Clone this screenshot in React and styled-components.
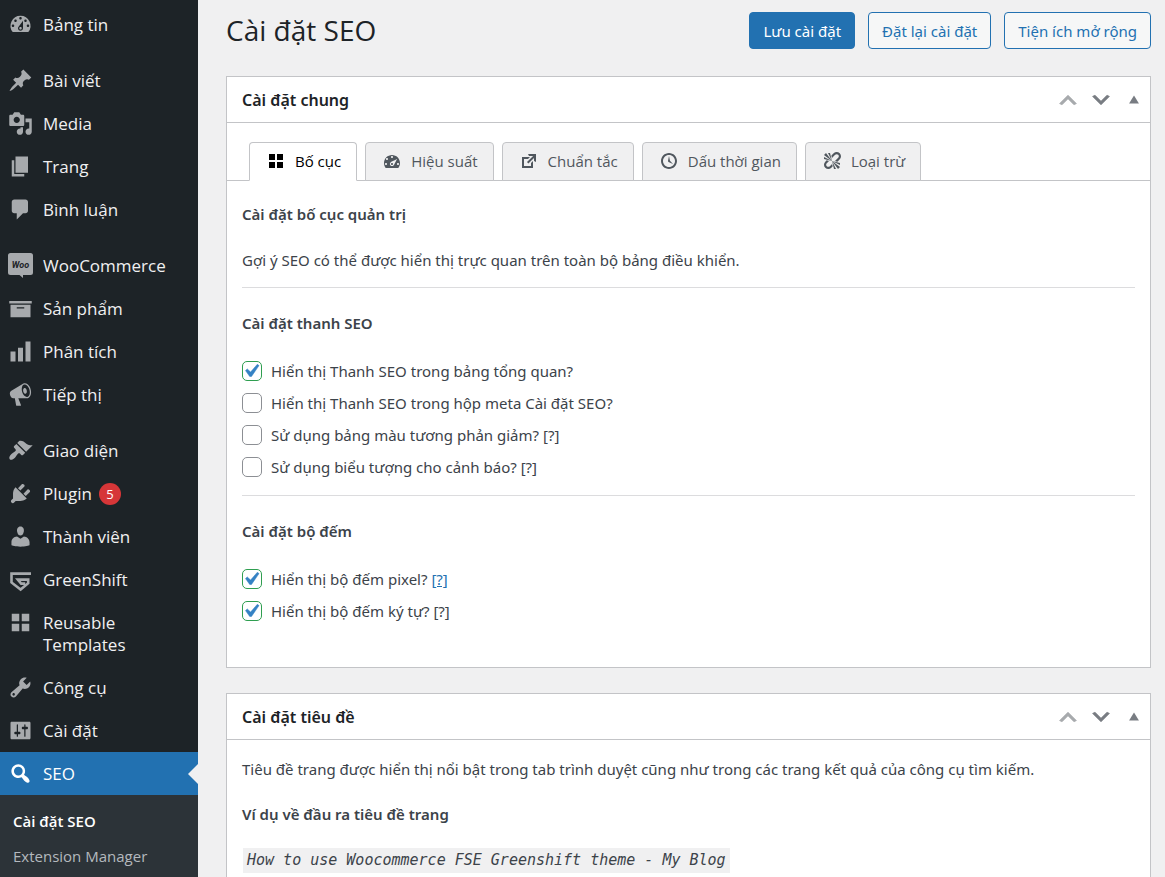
import React, { useState } from "react";
import styled, { createGlobalStyle, css } from "styled-components";

const GlobalStyle = createGlobalStyle`
  * {
    box-sizing: border-box;
  }
  body {
    margin: 0;
    background: #f0f0f1;
    color: #3c434a;
    font-family: "Noto Sans", "Open Sans", sans-serif;
    font-size: 15px;
    line-height: 24px;
  }
  button, input {
    font: inherit;
  }
`;

const Shell = styled.div`
  display: flex;
  height: 100vh;
  overflow: hidden;
`;

const Sidebar = styled.nav`
  flex: 0 0 198px;
  min-width: 0;
  background: #1d2327;
  padding-top: 3px;
  font-family: "Open Sans", "Noto Sans", sans-serif;
  ul {
    list-style: none;
    margin: 0;
    padding: 0;
  }
`;

const MenuItem = styled.li`
  margin-top: ${(p) => (p.$spaced ? 13 : 0)}px;
`;

const MenuLink = styled.a`
  display: flex;
  align-items: flex-start;
  position: relative;
  padding: 11px 24px 10px 8px;
  gap: 10px;
  color: #f0f0f1;
  font-size: 17px;
  line-height: 22px;
  text-decoration: none;
  svg {
    flex: none;
    width: 25px;
    height: 25px;
    margin: -2px 0 -1px;
    fill: #a7aaad;
  }
  ${(p) =>
    p.$active &&
    css`
      background: #2271b1;
      color: #fff;
      svg {
        fill: #fff;
      }
      &::after {
        content: "";
        position: absolute;
        right: 0;
        top: 50%;
        margin-top: -10px;
        border: 10px solid transparent;
        border-left: 0;
        border-right-color: #f0f0f1;
      }
    `}
`;

const Count = styled.span`
  display: inline-block;
  min-width: 22px;
  height: 22px;
  margin-left: 7px;
  border-radius: 11px;
  background: #d63638;
  color: #fff;
  font-size: 13px;
  line-height: 22px;
  text-align: center;
  vertical-align: top;
`;

const SubMenu = styled.ul`
  background: #2c3338;
  && {
    padding: 8px 0 100px;
  }
`;

const SubLink = styled.a`
  display: block;
  padding: 6px 13px 5px;
  color: ${(p) => (p.$current ? "#fff" : "#b4b9be")};
  font-size: 15px;
  font-weight: ${(p) => (p.$current ? 600 : 400)};
  text-decoration: none;
`;

const Main = styled.main`
  flex: 1;
  min-width: 0;
  padding: 12px 14px 0 28px;
`;

const TopBar = styled.header`
  display: flex;
  align-items: center;
  justify-content: space-between;
  margin-bottom: 27px;
  h1 {
    margin: 0;
    color: #1d2327;
    font-family: "Open Sans", "Noto Sans", sans-serif;
    font-size: 28px;
    font-weight: 400;
    line-height: 37px;
  }
`;

const Actions = styled.div`
  display: flex;
  gap: 13px;
`;

const Button = styled.button`
  height: 37px;
  padding: 0 13px;
  border: 1px solid #2271b1;
  border-radius: 4px;
  background: ${(p) => (p.$primary ? "#2271b1" : "#f6f7f7")};
  color: ${(p) => (p.$primary ? "#fff" : "#2271b1")};
  cursor: pointer;
`;

const Panel = styled.section`
  margin-bottom: 25px;
  border: 1px solid #c3c4c7;
  background: #fff;
`;

const PanelHeader = styled.div`
  display: flex;
  align-items: center;
  justify-content: space-between;
  height: 46px;
  padding: 0 4px 0 15px;
  border-bottom: 1px solid #c3c4c7;
  h2 {
    margin: 0;
    color: #1d2327;
    font-size: 16px;
    font-weight: 600;
  }
`;

const Handles = styled.div`
  display: flex;
  align-items: center;
  gap: 9px;
`;

const Handle = styled.button`
  display: flex;
  padding: 0;
  border: 0;
  background: none;
  color: ${(p) => (p.$faded ? "#a7aaad" : "#787c82")};
  svg {
    width: 24px;
    height: 24px;
    padding: ${(p) => (p.$small ? 3 : 0)}px;
    fill: currentColor;
    stroke: currentColor;
    stroke-width: ${(p) => (p.$small ? 0 : 0.6)};
    stroke-linejoin: round;
  }
`;

const Tabs = styled.div`
  display: flex;
  gap: 8px;
  padding: 19px 22px 0;
  border-bottom: 1px solid #c3c4c7;
`;

const Tab = styled.button`
  display: flex;
  align-items: center;
  gap: 9px;
  height: 39px;
  margin-bottom: -1px;
  padding: 0 15px 1px 16px;
  border: 1px solid #c3c4c7;
  border-bottom-color: ${(p) => (p.$active ? "#fff" : "#c3c4c7")};
  border-radius: 4px 4px 0 0;
  background: ${(p) => (p.$active ? "#fff" : "#f0f0f1")};
  color: ${(p) => (p.$active ? "#000" : "#50575e")};
  font-family: "Open Sans", "Noto Sans", sans-serif;
  font-size: 15px;
  font-weight: 500;
  white-space: nowrap;
  svg {
    width: 20px;
    height: 20px;
    fill: currentColor;
  }
`;

const PanelBody = styled.div`
  padding: ${(p) => (p.$tabbed ? "21px 15px 44px" : "17px 15px 60px")};
  h3 {
    margin: 0;
    font-size: 15px;
    font-weight: 600;
    line-height: 24px;
  }
  p {
    margin: 0;
  }
  hr {
    margin: 15px 0 23px;
    border: 0;
    border-top: 1px solid #dcdcde;
  }
  h3 + p {
    margin-top: 22px;
  }
  p + h3 {
    margin-top: 21px;
  }
`;

const Checks = styled.div`
  display: flex;
  flex-direction: column;
  gap: 8px;
  margin-top: 24px;
  & + hr {
    margin-top: 16px;
  }
`;

const CheckRow = styled.div`
  display: flex;
  align-items: center;
  gap: 9px;
  a {
    color: #2271b1;
  }
`;

const CheckBox = styled.span`
  display: grid;
  width: 20px;
  height: 20px;
  input,
  svg {
    grid-area: 1 / 1;
    width: 20px;
    height: 20px;
    margin: 0;
  }
  input {
    appearance: none;
    border: 1px solid #8c8f94;
    border-radius: 5px;
    background: #fff;
  }
  input:checked {
    border-color: #2f9e50;
  }
  svg {
    z-index: 1;
    width: 26px;
    height: 26px;
    margin: -3px -4px;
    fill: #3582c4;
    stroke: #3582c4;
    stroke-width: 0.4;
    pointer-events: none;
  }
`;

const Example = styled.code`
  display: inline-block;
  margin: 22px 0 0 1px;
  padding: 0 4px;
  background: #f0f0f1;
  font-family: "DejaVu Sans Mono", monospace;
  font-size: 15px;
  font-style: italic;
  line-height: 25px;
`;

const paths = {
  dashboard:
    "M3.76 16h12.48A7.998 7.998 0 0 0 10 3a7.998 7.998 0 0 0-6.24 13zM10 4c.55 0 1 .45 1 1s-.45 1-1 1-1-.45-1-1 .45-1 1-1zM6 6c.55 0 1 .45 1 1s-.45 1-1 1-1-.45-1-1 .45-1 1-1zm8 0c.55 0 1 .45 1 1s-.45 1-1 1-1-.45-1-1 .45-1 1-1zm-5.37 5.55L12 7v6c0 1.1-.9 2-2 2s-2-.9-2-2c0-.57.24-1.08.63-1.45zM4 10c.55 0 1 .45 1 1s-.45 1-1 1-1-.45-1-1 .45-1 1-1zm12 0c.55 0 1 .45 1 1s-.45 1-1 1-1-.45-1-1 .45-1 1-1zm-5 3c0-.55-.45-1-1-1s-1 .45-1 1 .45 1 1 1 1-.45 1-1z",
  post: "M10.44 3.02l1.82-1.82 6.36 6.35-1.83 1.82c-1.05-.68-2.48-.57-3.41.36l-.75.75c-.92.93-1.04 2.35-.35 3.41l-1.83 1.82-2.41-2.41-2.8 2.79c-.42.42-3.38 2.71-3.8 2.29s1.86-3.39 2.28-3.81l2.79-2.79L4.1 9.36l1.83-1.82c1.05.69 2.48.57 3.4-.36l.75-.75c.93-.92 1.05-2.35.36-3.41z",
  media:
    "M13 11V4c0-.55-.45-1-1-1h-1.67L9 1H5L3.67 3H2c-.55 0-1 .45-1 1v7c0 .55.45 1 1 1h10c.55 0 1-.45 1-1zM7 4.5c1.38 0 2.5 1.12 2.5 2.5S8.38 9.5 7 9.5 4.5 8.38 4.5 7 5.62 4.5 7 4.5zM14 6h5v10.5c0 1.38-1.12 2.5-2.5 2.5S14 17.88 14 16.5s1.12-2.5 2.5-2.5c.17 0 .34.02.5.05V9h-3V6zm-4 8.05V13h2v3.5c0 1.38-1.12 2.5-2.5 2.5S7 17.88 7 16.5 8.12 14 9.5 14c.17 0 .34.02.5.05z",
  page: "M6 15V2h10v13H6zm-1 1h8v2H3V5h2v11z",
  comments:
    "M5 2h9c1.1 0 2 .9 2 2v7c0 1.1-.9 2-2 2h-2l-5 5v-5H5c-1.1 0-2-.9-2-2V4c0-1.1.9-2 2-2z",
  archive: "M19 4v2H1V4h18zM2 7h16v10H2V7zm11 3V9H7v1h6z",
  chart: "M18 18V2h-4v16h4zm-6 0V7H8v11h4zm-6 0v-8H2v8h4z",
  megaphone:
    "M18.15 5.94c.46 1.62.38 3.22-.02 4.48-.42 1.28-1.26 2.18-2.3 2.48-.16.06-.26.06-.4.06-.06.02-.12.02-.18.02-.06.02-.14.02-.22.02h-6.8l2.22 5.5c.02.14-.06.26-.14.34-.08.1-.24.16-.34.16H6.95c-.1 0-.26-.06-.34-.16-.08-.08-.16-.2-.14-.34l-1-5.5H4.25l-.02-.02c-.5.06-1.08-.18-1.54-.62s-.88-1.08-1.06-1.88c-.24-.8-.2-1.56-.02-2.2.18-.62.58-1.08 1.06-1.3l.02-.02 9-5.4c.1-.06.18-.1.24-.16.06-.04.14-.08.24-.12.16-.08.28-.12.5-.18 1.04-.3 2.24.1 3.22.98s1.84 2.24 2.26 3.86zm-2.58 5.98h-.02c.4-.1.74-.34 1.04-.7.58-.7.86-1.76.86-3.04 0-.64-.1-1.3-.28-1.98-.34-1.36-1.02-2.5-1.78-3.24s-1.68-1.1-2.46-.88c-.82.22-1.4.96-1.7 2-.32 1.04-.28 2.36.06 3.72.38 1.36 1 2.5 1.8 3.24.78.74 1.62 1.1 2.48.88zm-2.54-7.08c.22-.04.42-.02.62.04.38.16.76.48 1.02 1s.42 1.2.42 1.78c0 .3-.04.56-.12.8-.18.48-.44.84-.86.94-.34.1-.8-.06-1.14-.4s-.64-.86-.78-1.5c-.18-.62-.12-1.24.02-1.72s.48-.84.82-.94z",
  appearance:
    "M14.48 11.06L7.41 3.99l1.5-1.5c.5-.56 2.3-.47 3.51.32 1.21.8 1.43 1.28 2.91 2.1 1.18.64 2.45 1.26 4.45.85zm-.71.71L6.7 4.7 4.93 6.47c-.39.39-.39 1.02 0 1.41l1.06 1.06c.39.39.39 1.03 0 1.42-.6.6-1.43 1.11-2.21 1.69-.35.26-.7.53-1.01.84C1.43 14.23.4 16.08 1.4 17.07c.99 1 2.84-.03 4.18-1.36.31-.31.58-.66.85-1.02.57-.78 1.08-1.61 1.69-2.21.39-.39 1.02-.39 1.41 0l1.06 1.06c.39.39 1.02.39 1.41 0z",
  plugins:
    "M13.11 4.36L9.87 7.6 8 5.73l3.24-3.24c.35-.34 1.05-.2 1.56.32.52.51.66 1.21.31 1.55zm-8 1.77l.91-1.12 9.01 9.01-1.19.84c-.71.71-2.63 1.16-3.82 1.16H6.14L4.9 17.26c-.59.59-1.54.59-2.12 0-.59-.58-.59-1.53 0-2.12l1.24-1.24v-3.88c0-1.13.4-3.19 1.09-3.89zm7.26 3.97l3.24-3.24c.34-.35 1.04-.21 1.55.31.52.51.66 1.21.31 1.55l-3.24 3.25z",
  users:
    "M10 9.25c-2.27 0-2.73-3.44-2.73-3.44C7 4.02 7.82 2 9.97 2c2.16 0 2.98 2.02 2.71 3.81 0 0-.41 3.44-2.68 3.44zm0 2.57L12.72 10c2.39 0 4.52 2.33 4.52 4.53v2.49s-3.65 1.13-7.24 1.13c-3.65 0-7.24-1.13-7.24-1.13v-2.49c0-2.25 1.94-4.48 4.47-4.48z",
  grid: "M9 9V3H3v6h6zm8 0V3h-6v6h6zm-8 8v-6H3v6h6zm8 0v-6h-6v6h6z",
  tools:
    "M16.68 9.77c-1.34 1.34-3.3 1.67-4.95.99l-5.41 6.52c-.99.99-2.59.99-3.58 0s-.99-2.59 0-3.57l6.52-5.42c-.68-1.65-.35-3.61.99-4.95 1.28-1.28 3.12-1.62 4.72-1.06l-2.89 2.89 2.82 2.82 2.86-2.87c.53 1.58.18 3.39-1.08 4.65zM3.81 16.21c.4.39 1.04.39 1.43 0 .4-.4.4-1.04 0-1.43-.39-.4-1.03-.4-1.43 0-.39.39-.39 1.03 0 1.43z",
  settings:
    "M18 16V4c0-.55-.45-1-1-1H3c-.55 0-1 .45-1 1v12c0 .55.45 1 1 1h14c.55 0 1-.45 1-1zM8 11h1c.55 0 1 .45 1 1s-.45 1-1 1H8v1.5c0 .28-.22.5-.5.5s-.5-.22-.5-.5V13H6c-.55 0-1-.45-1-1s.45-1 1-1h1V5.5c0-.28.22-.5.5-.5s.5.22.5.5V11zm5-2h-1c-.55 0-1-.45-1-1s.45-1 1-1h1V5.5c0-.28.22-.5.5-.5s.5.22.5.5V7h1c.55 0 1 .45 1 1s-.45 1-1 1h-1v5.5c0 .28-.22.5-.5.5s-.5-.22-.5-.5V9z",
  search:
    "M12.14 4.18c1.87 1.87 2.11 4.75.72 6.89.12.1.22.21.36.31.2.16.47.36.81.59.34.24.56.39.66.47.42.31.73.57.94.78.32.32.6.65.84 1 .25.35.44.69.59 1.04.14.35.21.68.18 1-.02.32-.14.59-.36.81s-.49.34-.81.36c-.31.02-.65-.04-.99-.19-.35-.14-.7-.34-1.04-.59-.35-.24-.68-.52-1-.84-.21-.21-.47-.52-.77-.93-.1-.13-.25-.35-.47-.66-.22-.32-.4-.57-.56-.78-.16-.2-.29-.35-.44-.5-2.07 1.09-4.69.76-6.44-.98-2.14-2.15-2.14-5.64 0-7.78 2.15-2.15 5.63-2.15 7.78 0zm-1.41 6.36c1.36-1.37 1.36-3.58 0-4.95-1.37-1.37-3.59-1.37-4.95 0-1.37 1.37-1.37 3.58 0 4.95 1.36 1.37 3.58 1.37 4.95 0z",
  performance:
    "M3.76 17.01h12.48C17.34 15.63 18 13.9 18 12c0-4.41-3.58-8-8-8s-8 3.59-8 8c0 1.9.66 3.63 1.76 5.01zM9 6c0-.55.45-1 1-1s1 .45 1 1c0 .56-.45 1-1 1s-1-.44-1-1zM4 8c0-.55.45-1 1-1s1 .45 1 1c0 .56-.45 1-1 1s-1-.44-1-1zm4.52 3.4c.84-.83 6.51-3.5 6.51-3.5s-2.66 5.68-3.49 6.51c-.84.84-2.18.84-3.02 0-.83-.83-.83-2.18 0-3.01zM3 13c0-.55.45-1 1-1s1 .45 1 1c0 .56-.45 1-1 1s-1-.44-1-1zm6 0c0 .56.45 1 1 1s1-.44 1-1c0-.55-.45-1-1-1s-1 .45-1 1zm6 0c0-.55.45-1 1-1s1 .45 1 1c0 .56-.45 1-1 1s-1-.44-1-1z",
  external:
    "M9 3h8v8l-2-1V6.92l-5.6 5.59-1.41-1.41L14.08 5H10zm3 12v-3l2-2v7H3V6h8L9 8H5v7h7z",
  clock:
    "M10 2c4.42 0 8 3.58 8 8s-3.58 8-8 8-8-3.58-8-8 3.58-8 8-8zm0 14c3.31 0 6-2.69 6-6s-2.69-6-6-6-6 2.69-6 6 2.69 6 6 6zm-.71-5.29c.07.05.14.1.23.15l-.02.02L14 13l-3.03-3.19L10 5l-.97 4.81h.01c0 .02-.01.05-.02.09S9 9.97 9 10c0 .28.1.52.29.71z",
  unlink:
    "M17.74 2.26c1.68 1.69 1.68 4.41 0 6.1l-1.53 1.52c-.32.33-.69.58-1.08.77L13 10l1.69-1.64.76-.77.76-.76c.84-.84.84-2.2 0-3.04-.84-.85-2.2-.85-3.04 0l-.77.76-.76.76L10 7l-.65-2.14c.19-.38.44-.75.77-1.07l1.52-1.53c1.69-1.68 4.42-1.68 6.1 0zM2 4l8 6-6-8zm4-2l4 8-2-8H6zM2 6l8 4-8-2V6zm7.36 7.69L10 13l.74 2.35-1.38 1.39c-1.69 1.68-4.41 1.68-6.1 0-1.68-1.68-1.68-4.42 0-6.1l1.39-1.38L7 10l-.69.64-1.52 1.53c-.85.84-.85 2.2 0 3.04.84.85 2.2.85 3.04 0zM18 16l-8-6 6 8zm-4 2l-4-8 2 8h2zm4-4l-8-4 8 2v2z",
  up: "M15 14l-5-5-5 5-2-1 7-7 7 7z",
  down: "M5 6l5 5 5-5 2 1-7 7-7-7z",
  triangle: "M10 5l5.5 9h-11z",
  check: "M14.83 4.89l1.34.94-5.81 8.38H9.02L5.78 9.67l1.34-1.25 2.57 2.4z",
};

const Icon = ({ name }) => {
  if (name === "woo") {
    return (
      <svg viewBox="0 0 25 25" aria-hidden="true">
        <path d="M2.5 0h20A2.5 2.5 0 0 1 25 2.5v17a2.5 2.5 0 0 1-2.5 2.5H15v3l-3.5-3h-9A2.5 2.5 0 0 1 0 19.500v-17A2.500 2.500 0 0 1 2.500 0z" />
        <text
          x="12.500"
          y="14.500"
          textAnchor="middle"
          fontFamily="Roboto, sans-serif"
          fontSize="9"
          fontWeight="700"
          fontStyle="italic"
          style={{ fill: "#1d2327" }}
        >
          Woo
        </text>
      </svg>
    );
  }
  if (name === "greenshift") {
    return (
      <svg viewBox="0 0 25 25" aria-hidden="true">
        <path
          d="M23 6.6H3.5v8.8l9.1 7.2 7.6-6.4v-3.6H9.8l3.4 4h4"
          style={{ fill: "none" }}
          stroke="#a7aaad"
          strokeWidth="2.6"
        />
      </svg>
    );
  }
  return (
    <svg viewBox="0 0 20 20" aria-hidden="true">
      <path d={paths[name]} />
    </svg>
  );
};

const menu = [
  { icon: "dashboard", label: "Bảng tin" },
  { icon: "post", label: "Bài viết", spaced: true },
  { icon: "media", label: "Media" },
  { icon: "page", label: "Trang" },
  { icon: "comments", label: "Bình luận" },
  { icon: "woo", label: "WooCommerce", spaced: true },
  { icon: "archive", label: "Sản phẩm" },
  { icon: "chart", label: "Phân tích" },
  { icon: "megaphone", label: "Tiếp thị" },
  { icon: "appearance", label: "Giao diện", spaced: true },
  { icon: "plugins", label: "Plugin", count: 5 },
  { icon: "users", label: "Thành viên" },
  { icon: "greenshift", label: "GreenShift" },
  { icon: "grid", label: "Reusable Templates" },
  { icon: "tools", label: "Công cụ" },
  { icon: "settings", label: "Cài đặt" },
  { icon: "search", label: "SEO", active: true },
];

const tabs = [
  { icon: "grid", label: "Bố cục" },
  { icon: "performance", label: "Hiệu suất" },
  { icon: "external", label: "Chuẩn tắc" },
  { icon: "clock", label: "Dấu thời gian" },
  { icon: "unlink", label: "Loại trừ" },
];

const Check = ({ id, label, on, help, link }) => {
  const [checked, setChecked] = useState(!!on);
  return (
    <CheckRow>
      <CheckBox>
        <input
          type="checkbox"
          id={id}
          checked={checked}
          onChange={(e) => setChecked(e.target.checked)}
        />
        {checked && <Icon name="check" />}
      </CheckBox>
      <span>
        <label htmlFor={id}>{label}</label>
        {help && " "}
        {help && (link ? <a href="#help">[?]</a> : <span>[?]</span>)}
      </span>
    </CheckRow>
  );
};

const Header = ({ title }) => (
  <PanelHeader>
    <h2>{title}</h2>
    <Handles>
      <Handle type="button" $faded>
        <Icon name="up" />
      </Handle>
      <Handle type="button">
        <Icon name="down" />
      </Handle>
      <Handle type="button" $small>
        <Icon name="triangle" />
      </Handle>
    </Handles>
  </PanelHeader>
);

export default function App() {
  const [tab, setTab] = useState(0);

  return (
    <>
      <GlobalStyle />
      <Shell>
        <Sidebar>
          <ul>
            {menu.map((item) => (
              <MenuItem key={item.label} $spaced={item.spaced}>
                <MenuLink href="#" $active={item.active}>
                  <Icon name={item.icon} />
                  <span>
                    {item.label}
                    {item.count && <Count>{item.count}</Count>}
                  </span>
                </MenuLink>
              </MenuItem>
            ))}
          </ul>
          <SubMenu>
            <li>
              <SubLink href="#" $current>
                Cài đặt SEO
              </SubLink>
            </li>
            <li>
              <SubLink href="#">Extension Manager</SubLink>
            </li>
          </SubMenu>
        </Sidebar>
        <Main>
          <TopBar>
            <h1>Cài đặt SEO</h1>
            <Actions>
              <Button type="button" $primary>
                Lưu cài đặt
              </Button>
              <Button type="button">Đặt lại cài đặt</Button>
              <Button type="button">Tiện ích mở rộng</Button>
            </Actions>
          </TopBar>

          <Panel>
            <Header title="Cài đặt chung" />
            <Tabs role="tablist">
              {tabs.map((t, i) => (
                <Tab
                  key={t.label}
                  type="button"
                  role="tab"
                  aria-selected={tab === i}
                  $active={tab === i}
                  onClick={() => setTab(i)}
                >
                  <Icon name={t.icon} />
                  {t.label}
                </Tab>
              ))}
            </Tabs>
            <PanelBody $tabbed>
              <h3>Cài đặt bố cục quản trị</h3>
              <p>
                Gợi ý SEO có thể được hiển thị trực quan trên toàn bộ bảng điều
                khiển.
              </p>
              <hr />
              <h3>Cài đặt thanh SEO</h3>
              <Checks>
                <Check
                  id="bar-tables"
                  label="Hiển thị Thanh SEO trong bảng tổng quan?"
                  on
                />
                <Check
                  id="bar-metabox"
                  label="Hiển thị Thanh SEO trong hộp meta Cài đặt SEO?"
                />
                <Check
                  id="bar-contrast"
                  label="Sử dụng bảng màu tương phản giảm?"
                  help
                />
                <Check
                  id="bar-symbols"
                  label="Sử dụng biểu tượng cho cảnh báo?"
                  help
                />
              </Checks>
              <hr />
              <h3>Cài đặt bộ đếm</h3>
              <Checks>
                <Check
                  id="counter-pixel"
                  label="Hiển thị bộ đếm pixel?"
                  on
                  help
                  link
                />
                <Check
                  id="counter-char"
                  label="Hiển thị bộ đếm ký tự?"
                  on
                  help
                />
              </Checks>
            </PanelBody>
          </Panel>

          <Panel>
            <Header title="Cài đặt tiêu đề" />
            <PanelBody>
              <p>
                Tiêu đề trang được hiển thị nổi bật trong tab trình duyệt cũng
                như trong các trang kết quả của công cụ tìm kiếm.
              </p>
              <h3>Ví dụ về đầu ra tiêu đề trang</h3>
              <Example>
                How to use Woocommerce FSE Greenshift theme - My Blog
              </Example>
            </PanelBody>
          </Panel>
        </Main>
      </Shell>
    </>
  );
}
